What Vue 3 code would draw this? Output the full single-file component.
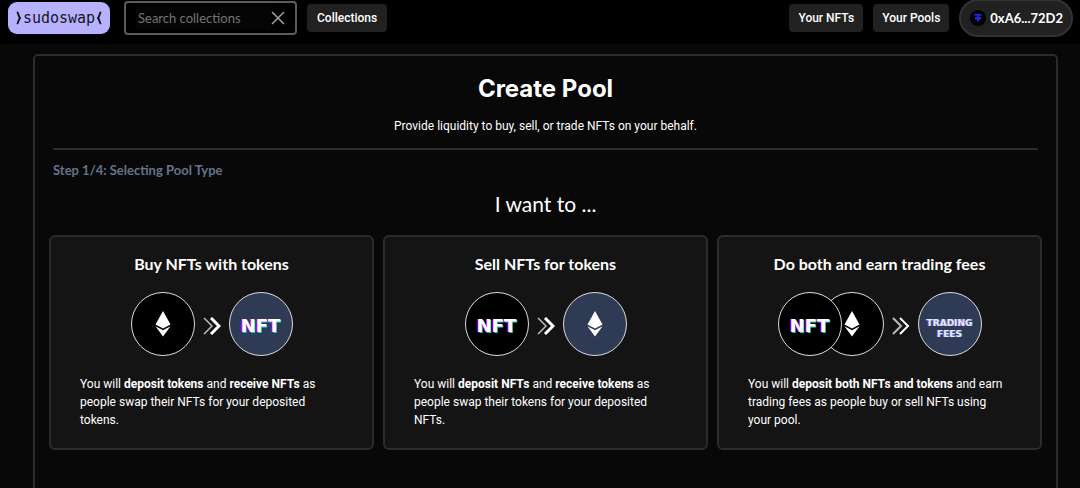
<script setup>
import { ref } from 'vue'

const search = ref('')

const options = [
  {
    title: 'Buy NFTs with tokens',
    from: ['eth'],
    to: 'nft',
    text: [['You will '], ['deposit tokens', true], [' and '], ['receive NFTs', true], [' as people swap their NFTs for your deposited tokens.']],
  },
  {
    title: 'Sell NFTs for tokens',
    from: ['nft'],
    to: 'eth',
    text: [['You will '], ['deposit NFTs', true], [' and '], ['receive tokens', true], [' as people swap their tokens for your deposited NFTs.']],
  },
  {
    title: 'Do both and earn trading fees',
    from: ['nft', 'eth'],
    to: 'fees',
    text: [['You will '], ['deposit both NFTs and tokens', true], [' and earn trading fees as people buy or sell NFTs using your pool.']],
  },
]
</script>

<template>
  <div class="page">
    <header class="topbar">
      <a class="logo" href="#">
        <svg width="5" height="14" viewBox="0 0 5 14" aria-hidden="true"><path d="M1 1C3 2.500 2 5 4 7C2 9 3 11.500 1 13" /></svg>
        <span>sudoswap</span>
        <svg width="5" height="14" viewBox="0 0 5 14" aria-hidden="true"><path d="M4 1C2 2.500 3 5 1 7C3 9 2 11.500 4 13" /></svg>
      </a>
      <div class="search">
        <input v-model="search" type="text" placeholder="Search collections" aria-label="Search collections" />
        <button type="button" aria-label="Clear search" @click="search = ''">
          <svg width="14" height="14" viewBox="0 0 14 14"><path d="M1 1L13 13M13 1L1 13" /></svg>
        </button>
      </div>
      <a class="nav browse" href="#">Collections</a>
      <div class="spacer"></div>
      <a class="nav" href="#">Your NFTs</a>
      <a class="nav" href="#">Your Pools</a>
      <button type="button" class="wallet">
        <svg width="16" height="16" viewBox="0 0 16 16" aria-hidden="true">
          <circle cx="8" cy="8" r="8" fill="#000" />
          <path d="M4 4H12V5.500H9V7H11V9.500H9.500L8 12.500L6.500 9.500H5V7H7V5.500H4Z" fill="#2426dc" />
        </svg>
        <span>0xA6...72D2</span>
      </button>
    </header>

    <main class="panel">
      <h1>Create Pool</h1>
      <p class="lead">Provide liquidity to buy, sell, or trade NFTs on your behalf.</p>
      <hr />
      <p class="step">Step 1/4: Selecting Pool Type</p>
      <h2>I want to ...</h2>
      <div class="cards">
        <button v-for="o in options" :key="o.title" type="button" class="card">
          <span class="title">{{ o.title }}</span>
          <span class="flow">
            <span class="sources">
              <span v-for="k in o.from" :key="k" class="coin">
                <svg v-if="k === 'eth'" class="eth" width="16" height="26" viewBox="0 0 16 26"><path d="M8 0L15.500 13.500L8 17.500L0.500 13.500Z" /><path d="M0.500 15.200L8 19.300L15.500 15.200L8 25.500Z" /></svg>
                <span v-else class="nft">NFT</span>
              </span>
            </span>
            <svg class="arrows" :class="{ even: o.to === 'fees' }" width="18" height="18" viewBox="0 0 18 18" aria-hidden="true">
              <path class="back" d="M1 1L9 9L1 17" />
              <path class="front" d="M8 1L16 9L8 17" />
            </svg>
            <span class="coin target">
              <svg v-if="o.to === 'eth'" class="eth" width="16" height="26" viewBox="0 0 16 26"><path d="M8 0L15.500 13.500L8 17.500L0.500 13.500Z" /><path d="M0.500 15.200L8 19.300L15.500 15.200L8 25.500Z" /></svg>
              <span v-else-if="o.to === 'nft'" class="nft">NFT</span>
              <span v-else class="fees">TRADING<br />FEES</span>
            </span>
          </span>
          <span class="text"><template v-for="(part, i) in o.text" :key="i"><b v-if="part[1]">{{ part[0] }}</b><template v-else>{{ part[0] }}</template></template></span>
        </button>
      </div>
    </main>
  </div>
</template>

<style>
body {
  margin: 0;
  background: #080808;
}
</style>

<style scoped>
.page {
  display: flex;
  flex-direction: column;
  min-height: 100vh;
  color: #fff;
  font-family: Lato, "Liberation Sans", sans-serif;
  font-size: 13px;
}
.page * {
  box-sizing: border-box;
}
button,
input {
  font: inherit;
  color: inherit;
  margin: 0;
}
a {
  color: inherit;
  text-decoration: none;
}
.topbar {
  display: flex;
  align-items: center;
  height: 44px;
  padding: 0 7px 8px 8px;
  background: #000;
}
.logo {
  display: flex;
  align-items: center;
  justify-content: center;
  gap: 2px;
  width: 102px;
  height: 32px;
  margin-right: 14px;
  border-radius: 9px;
  background: #b6b2ff;
  color: #15151c;
  font-family: "DejaVu Sans Mono", monospace;
  font-size: 15px;
}
.logo svg {
  fill: none;
  stroke: #15151c;
  stroke-width: 2;
}
.search {
  display: flex;
  align-items: center;
  width: 173px;
  height: 34px;
  margin-right: 10px;
  padding: 0 10px;
  border: 2px solid #5c5c5c;
  border-radius: 4px;
}
.search input {
  flex: 1;
  min-width: 0;
  height: 22px;
  padding: 0 2px;
  border: 0;
  outline: 0;
  background: #050505;
}
.search input::placeholder {
  color: #757575;
  opacity: 1;
}
.search button {
  display: flex;
  padding: 0;
  border: 0;
  background: none;
}
.search svg {
  stroke: #a0a0a0;
  stroke-width: 1.5;
}
.nav {
  height: 28px;
  padding: 0 9px;
  border-radius: 4px;
  background: #212121;
  font-family: Roboto, sans-serif;
  font-size: 12px;
  font-weight: 500;
  line-height: 28px;
}
.browse {
  padding: 0 10px;
}
.nav + .nav,
.nav + .wallet {
  margin-left: 10px;
}
.spacer {
  flex: 1;
}
.wallet {
  display: flex;
  align-items: center;
  gap: 4px;
  height: 38px;
  padding: 0 8px 0 9px;
  border: 2px solid #333;
  border-radius: 19px;
  background: #212121;
  font-weight: 700;
}
.panel {
  flex: 1;
  margin: 10px 22px 0 33px;
  padding: 0 14px;
  border: 2px solid #2b2b2b;
  border-bottom: 0;
  border-radius: 5px 5px 0 0;
  text-align: center;
}
h1 {
  margin: 17px 0 0;
  font: 700 24px/32px Inter, sans-serif;
}
.lead {
  margin: 12px 0 0;
  font-family: Roboto, sans-serif;
  font-size: 12px;
  line-height: 18px;
}
hr {
  height: 2px;
  margin: 13px 4px 0;
  border: 0;
  background: #2b2b2b;
}
.step {
  margin: 11px 4px 0;
  color: #64748b;
  font-weight: 700;
  line-height: 18px;
  text-align: left;
}
h2 {
  margin: 10px 0 0;
  font-size: 21px;
  font-weight: 400;
  line-height: 30px;
}
.cards {
  display: grid;
  grid-template-columns: repeat(3, 1fr);
  gap: 9px;
  margin-top: 16px;
}
.card {
  display: flex;
  flex-direction: column;
  padding: 16px 29px 19px;
  border: 2px solid #2c2c2c;
  border-radius: 6px;
  background: #141414;
}
.title {
  align-self: center;
  font-size: 16px;
  font-weight: 700;
  line-height: 22px;
}
.flow {
  display: flex;
  align-items: center;
  align-self: center;
  gap: 8px;
  margin: 17px 0 19px;
}
.sources {
  display: flex;
}
.coin {
  display: flex;
  align-items: center;
  justify-content: center;
  width: 64px;
  height: 64px;
  border: 1px solid #ddd;
  border-radius: 50%;
  background: #000;
}
.sources .coin:first-child {
  z-index: 1;
}
.coin + .coin {
  margin-left: -22px;
}
.target {
  background: #2f3b55;
}
.eth {
  fill: #fff;
}
.nft,
.fees {
  font-family: "DejaVu Sans", sans-serif;
  font-weight: 700;
}
.nft {
  padding-top: 3px;
  font-size: 18px;
  text-shadow: -1px 0 #f0f, 1px 1px #0cc;
}
.fees {
  padding-top: 9px;
  font-size: 9px;
  line-height: 11px;
  color: #dfe9ff;
  text-shadow: -1px 0 #a050c0, 1px 0 #3a90a8;
}
.arrows {
  margin-top: 3px;
  fill: none;
  stroke: #fff;
}
.back {
  stroke: #bbb;
  stroke-width: 1.5;
}
.front {
  stroke-width: 3;
}
.even path {
  stroke-width: 2;
}
.text {
  font-family: Roboto, sans-serif;
  font-size: 12px;
  line-height: 18px;
  text-align: left;
}
</style>
